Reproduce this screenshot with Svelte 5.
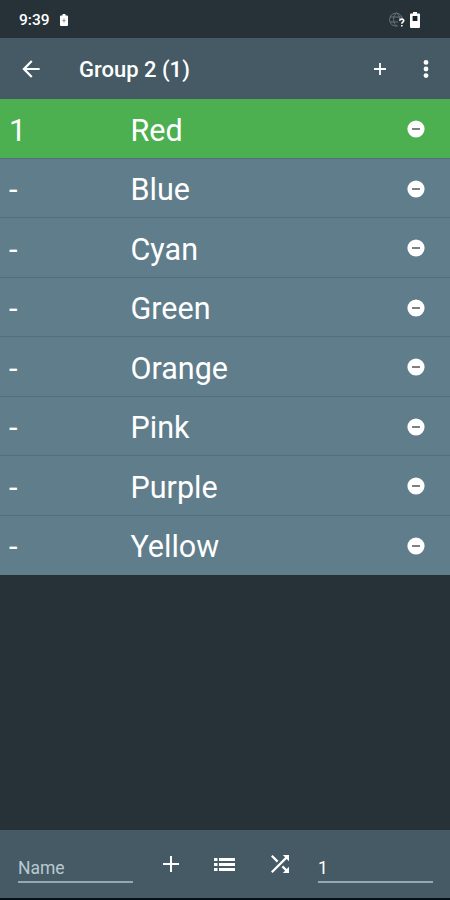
<script>
  let title = $state('Group 2 (1)');
  let name = $state('');
  let count = $state('1');

  let entries = $state([
    { order: '1', label: 'Red', picked: true },
    { order: '-', label: 'Blue', picked: false },
    { order: '-', label: 'Cyan', picked: false },
    { order: '-', label: 'Green', picked: false },
    { order: '-', label: 'Orange', picked: false },
    { order: '-', label: 'Pink', picked: false },
    { order: '-', label: 'Purple', picked: false },
    { order: '-', label: 'Yellow', picked: false },
  ]);

  function addEntry() {
    if (!name.trim()) return;
    entries.push({ order: '-', label: name.trim(), picked: false });
    name = '';
  }

  function removeEntry(index) {
    entries.splice(index, 1);
  }
</script>

<div class="screen">
  <div class="status-bar">
    <span class="clock">9:39</span>
    <svg class="battery-small" viewBox="0 0 8 12">
      <path d="M2.500 0h3v1.500H7a1 1 0 0 1 1 1V11a1 1 0 0 1-1 1H1a1 1 0 0 1-1-1V2.500a1 1 0 0 1 1-1h1.500z" fill="#fff" />
      <path d="M4 4.500v4M2.500 6.500h3" stroke="#87949a" stroke-width="1" />
    </svg>
    <svg class="globe" viewBox="0 0 17 16">
      <g fill="none" stroke="#65727a" stroke-width="1">
        <path d="M13.500 7A6.500 6.500 0 1 0 9 13.800" />
        <path d="M7.500 1C3.500 4 3.500 11 7.500 14M7.500 1c2 1.500 3 3.500 3 6M1 5h12M1 10h8" />
      </g>
      <path d="M10.700 8.800c.2-2.300 4-2.100 4 0 0 1.400-1.900 1.500-1.900 3M12.800 13v1.600" fill="none" stroke="#fff" stroke-width="1.600" />
    </svg>
    <svg class="battery" viewBox="0 0 10 16">
      <path d="M3 0h4v1.500h2a1 1 0 0 1 1 1V15a1 1 0 0 1-1 1H1a1 1 0 0 1-1-1V2.500a1 1 0 0 1 1-1h2z" fill="#fff" />
      <rect x="2.600" y="4" width="4.800" height="5" fill="#172228" />
    </svg>
  </div>

  <header class="app-bar">
    <button class="back" aria-label="Back">
      <svg viewBox="0 0 24 24"><path d="M20 11H7.830l5.590-5.590L12 4l-8 8 8 8 1.410-1.410L7.830 13H20z" /></svg>
    </button>
    <h1>{title}</h1>
    <button class="add" aria-label="Add">
      <svg viewBox="0 0 12 12"><path d="M5.100 0h1.800v5.100H12v1.800H6.900V12H5.100V6.900H0V5.100h5.100z" /></svg>
    </button>
    <button class="more" aria-label="More options">
      <svg viewBox="0 0 6 20">
        <circle cx="3" cy="3.400" r="2.400" />
        <circle cx="3" cy="10" r="2.400" />
        <circle cx="3" cy="16.600" r="2.400" />
      </svg>
    </button>
  </header>

  <ul class="entries">
    {#each entries as entry, i}
      <li class="entry" class:picked={entry.picked}>
        <span class="order">{entry.order}</span>
        <span class="label">{entry.label}</span>
        <button class="remove" aria-label="Remove" onclick={() => removeEntry(i)}>
          <svg viewBox="0 0 18 18">
            <circle cx="9" cy="9" r="8.600" />
            <rect class="minus" x="5" y="8.100" width="8" height="1.800" />
          </svg>
        </button>
      </li>
    {/each}
  </ul>

  <footer class="bottom-bar">
    <input type="text" placeholder="Name" aria-label="Name" bind:value={name} />
    <div class="actions">
      <button aria-label="Add entry" onclick={addEntry}>
        <svg class="plus" viewBox="0 0 16 16"><path d="M7 0h2v7h7v2H9v7H7V9H0V7h7z" /></svg>
      </button>
      <button aria-label="List">
        <svg class="list" viewBox="0 0 21 13">
          <path d="M0 0h3.500v3H0zM5 0h16v3H5zM0 5h3.500v3H0zM5 5h16v3H5zM0 10h3.500v3H0zM5 10h16v3H5z" />
        </svg>
      </button>
      <button aria-label="Shuffle">
        <svg class="shuffle" viewBox="4 4 16 16">
          <path d="M10.590 9.170L5.410 4 4 5.410l5.170 5.170 1.420-1.410zM14.500 4l2.040 2.040L4 18.590 5.410 20 17.960 7.460 20 9.500V4h-5.500zm.330 9.410l-1.410 1.410 3.130 3.130L14.500 20H20v-5.500l-2.040 2.040-3.130-3.130z" />
        </svg>
      </button>
    </div>
    <input type="text" class="count" aria-label="Count" bind:value={count} />
  </footer>
</div>

<style>
  :global(body) {
    background: #263238;
  }

  .screen {
    display: flex;
    flex-direction: column;
    height: 900px;
    width: 100%;
    box-sizing: border-box;
    border-bottom: 2px solid #080f17;
    background: #263238;
    color: #fff;
    font-family: Roboto, sans-serif;
    overflow: hidden;
  }

  button {
    display: flex;
    align-items: center;
    justify-content: center;
    padding: 0;
    border: 0;
    background: none;
    color: inherit;
  }

  svg {
    display: block;
    fill: currentColor;
  }

  .status-bar {
    display: flex;
    align-items: center;
    height: 38px;
    padding: 1px 30px 0 19px;
    box-sizing: border-box;
    flex-shrink: 0;
  }

  .clock {
    font-size: 15.5px;
    font-weight: 500;
  }

  .battery-small {
    width: 8px;
    height: 12px;
    margin-left: 10px;
  }

  .globe {
    width: 17px;
    height: 16px;
    margin-left: auto;
  }

  .battery {
    width: 10px;
    height: 16px;
    margin-left: 4px;
  }

  .app-bar {
    display: flex;
    align-items: center;
    height: 61px;
    padding: 0 21px 0 18px;
    box-sizing: border-box;
    flex-shrink: 0;
    background: #455a64;
  }

  .back svg {
    width: 26px;
    height: 26px;
  }

  h1 {
    flex: 1;
    margin: 1px 0 0 35px;
    font-size: 22px;
    font-weight: 500;
  }

  .add svg {
    width: 12px;
    height: 12px;
  }

  .more {
    margin-left: 37px;
  }

  .more svg {
    width: 6px;
    height: 20px;
  }

  .entries {
    flex: 1;
    margin: 0;
    padding: 0;
    list-style: none;
  }

  .entry {
    display: flex;
    align-items: center;
    height: 59.5px;
    padding: 2px 25px 0 9px;
    box-sizing: border-box;
    border-bottom: 1.5px solid #546e7a;
    background: #607d8b;
    font-size: 30.5px;
  }

  .entry.picked {
    background: #4caf50;
  }

  .entry:last-child {
    border-bottom-color: #607d8b;
  }

  .order,
  .label {
    padding-top: 2px;
  }

  .order {
    width: 121.5px;
  }

  .label {
    flex: 1;
  }

  .remove svg {
    width: 18px;
    height: 18px;
  }

  .minus {
    fill: #6c7378;
  }

  .bottom-bar {
    display: flex;
    align-items: flex-start;
    height: 68px;
    padding: 0 17px 0 18px;
    box-sizing: border-box;
    flex-shrink: 0;
    background: #455a64;
  }

  input {
    width: 115px;
    height: 53px;
    padding: 24px 0 0;
    box-sizing: border-box;
    border: 0;
    border-bottom: 2px solid #94a9b3;
    border-radius: 0;
    outline: 0;
    background: none;
    color: #fff;
    font: 17.5px Roboto, sans-serif;
  }

  input::placeholder {
    color: #b8c9d1;
    opacity: 1;
  }

  .actions {
    display: flex;
    flex: 1;
    align-items: center;
    justify-content: space-between;
    height: 68px;
    padding: 0 29px 0 29.5px;
  }

  .plus {
    width: 16px;
    height: 16px;
  }

  .list {
    width: 21px;
    height: 13px;
  }

  .shuffle {
    width: 18px;
    height: 18px;
  }
</style>
